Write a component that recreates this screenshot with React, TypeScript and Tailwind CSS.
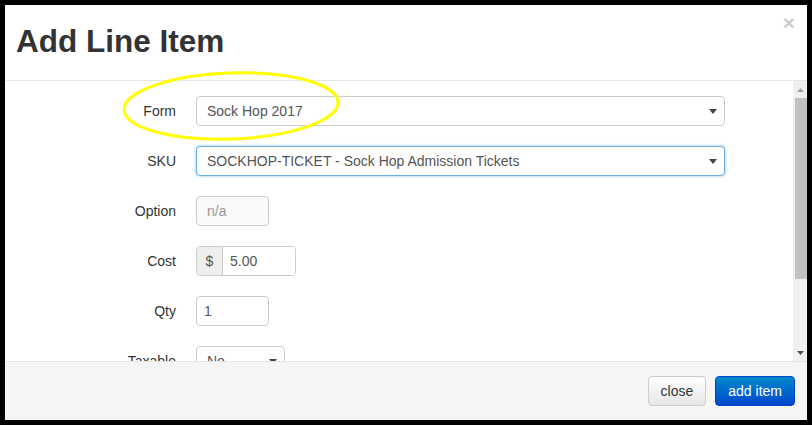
import React from "react";

const Caret = () => (
    <svg width="8" height="5" viewBox="0 0 8 5" className="shrink-0">
        <path d="M0 0 L8 0 L4 5 Z" fill="#444" />
    </svg>
);

const SelectBox = ({
    value,
    width,
    focused = false,
}: {
    value: string;
    width: string;
    focused?: boolean;
}) => (
    <div
        className={`${width} h-[30px] flex items-center justify-between pl-[10px] pr-[7px] rounded-[4px] border bg-white text-[14px] text-[#555] ${
            focused
                ? "border-[#66afe9] shadow-[0_0_3px_rgba(102,175,233,0.8)]"
                : "border-[#ccc]"
        }`}
    >
        <span>{value}</span>
        <Caret />
    </div>
);

const Row = ({ label, children }: { label: string; children: React.ReactNode }) => (
    <div className="flex items-center h-[30px]">
        <div className="w-[171px] text-right text-[14px] text-[#333]">{label}</div>
        <div className="ml-[20px]">{children}</div>
    </div>
);

export default function App() {
    return (
        <div className="w-[812px] h-[425px] bg-black p-[5px] font-['Liberation_Sans',Arial,sans-serif]">
            <div className="relative w-[802px] h-[415px] bg-white flex flex-col overflow-hidden">
                {/* header */}
                <div className="h-[76px] shrink-0 border-b border-[#e5e5e5] flex items-center justify-between pl-[11px] pr-[12px]">
                    <h2 className="text-[31.5px] font-bold text-[#333] leading-none mt-[-2px]">
                        Add Line Item
                    </h2>
                    <span className="self-start mt-[7px] text-[21px] font-bold text-black opacity-20 leading-none">
                        ×
                    </span>
                </div>

                {/* body */}
                <div className="h-[280px] shrink-0 flex">
                    <div className="flex-1 overflow-hidden pt-[15px] flex flex-col gap-[20px]">
                        <Row label="Form">
                            <SelectBox value="Sock Hop 2017" width="w-[529px]" />
                        </Row>
                        <Row label="SKU">
                            <SelectBox
                                value="SOCKHOP-TICKET - Sock Hop Admission Tickets"
                                width="w-[529px]"
                                focused
                            />
                        </Row>
                        <Row label="Option">
                            <div className="w-[73px] h-[30px] flex items-center px-[10px] rounded-[4px] border border-[#ccc] bg-[#fafafa] text-[14px] text-[#999]">
                                n/a
                            </div>
                        </Row>
                        <Row label="Cost">
                            <div className="flex h-[30px] w-[100px] rounded-[4px] border border-[#ccc] overflow-hidden text-[14px]">
                                <div className="w-[26px] bg-[#eee] border-r border-[#ccc] flex items-center justify-center text-[#555]">
                                    $
                                </div>
                                <div className="flex-1 flex items-center pl-[7px] text-[#555] bg-white">
                                    5.00
                                </div>
                            </div>
                        </Row>
                        <Row label="Qty">
                            <div className="w-[73px] h-[30px] flex items-center px-[7px] rounded-[4px] border border-[#ccc] bg-white text-[14px] text-[#555]">
                                1
                            </div>
                        </Row>
                        <Row label="Taxable">
                            <SelectBox value="No" width="w-[89px]" />
                        </Row>
                    </div>

                    {/* scrollbar */}
                    <div className="w-[14px] bg-[#f0f0f0] flex flex-col items-end">
                        <div className="h-[17px] w-full flex items-center justify-center">
                            <svg width="7" height="4" viewBox="0 0 7 4">
                                <path d="M0 4 L7 4 L3.5 0 Z" fill="#a3a3a3" />
                            </svg>
                        </div>
                        <div className="w-[12px] h-[181px] bg-[#c1c1c1]" />
                        <div className="flex-1" />
                        <div className="h-[17px] w-full flex items-center justify-center">
                            <svg width="7" height="4" viewBox="0 0 7 4">
                                <path d="M0 0 L7 0 L3.5 4 Z" fill="#505050" />
                            </svg>
                        </div>
                    </div>
                </div>

                {/* footer */}
                <div className="flex-1 border-t border-[#e5e5e5] bg-[#f5f5f5] flex items-start justify-end gap-[9px] pt-[14px] pr-[12px]">
                    <button className="h-[30px] px-[12px] rounded-[4px] border border-[#ccc] bg-gradient-to-b from-white to-[#e6e6e6] text-[14px] text-[#333]">
                        close
                    </button>
                    <button className="h-[30px] px-[12px] rounded-[4px] border border-[#0044cc] bg-gradient-to-b from-[#0088cc] to-[#0044cc] text-[14px] text-white">
                        add item
                    </button>
                </div>

                {/* highlight ellipse */}
                <svg
                    className="absolute left-[115px] top-[64px] pointer-events-none"
                    width="222"
                    height="74"
                >
                    <ellipse
                        cx="111"
                        cy="37"
                        rx="107"
                        ry="33"
                        fill="none"
                        stroke="#ffff00"
                        strokeWidth="3"
                        transform="rotate(-2 111 37)"
                    />
                </svg>
            </div>
        </div>
    );
}
